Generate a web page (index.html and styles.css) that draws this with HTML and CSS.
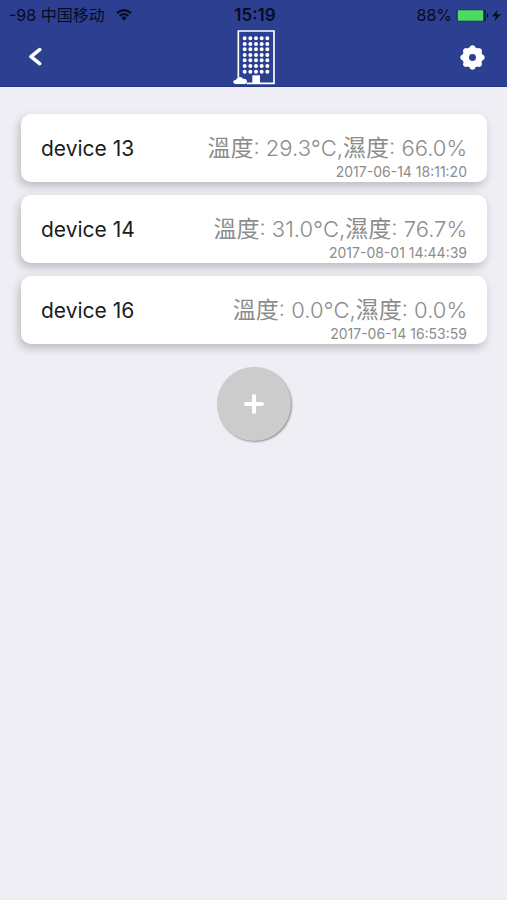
FILE: index.html
```html
<!DOCTYPE html>
<html lang="zh-Hant">
<head>
    <meta charset="UTF-8">
    <meta name="viewport" content="width=device-width, initial-scale=1">
    <title>Devices</title>
    <link rel="stylesheet" href="styles.css">
</head>
<body>
<header class="header">
    <div class="status">
        <div class="carrier">
            <span lang="zh-Hans">-98 中国移动</span>
            <svg class="wifi" viewBox="0 0 48 36">
                <path d="M3 13Q24 -6 45 13M11 21Q24 9 37 21" fill="none" stroke="currentColor" stroke-width="6"/>
                <path d="M16 26Q24 19 32 26L24 35Z" fill="currentColor"/>
            </svg>
        </div>
        <time class="clock">15:19</time>
        <div class="power">
            <span>88%</span>
            <svg class="battery" viewBox="0 0 135 39">
                <rect x="2" y="2" width="88" height="35" rx="5" fill="#17204d"/>
                <rect x="5" y="4" width="77" height="31" rx="2" fill="#4cdb60"/>
                <path d="M93 12Q101 19 93 27Z" fill="#070b20"/>
                <path d="M124 3L109 22H120L115 37L135 16H122Z" fill="#070b20"/>
            </svg>
        </div>
    </div>
    <nav class="nav">
        <button class="nav-button" aria-label="Back">
            <svg class="back" viewBox="0 0 42 60">
                <path d="M35 8L9 29L35 50" fill="none" stroke="#fff" stroke-width="11" stroke-linecap="round" stroke-linejoin="round"/>
            </svg>
        </button>
        <svg class="building" viewBox="36 87 132 168">
            <path d="M55 232V93H162V250H80" fill="none" stroke="#fff" stroke-width="5"/>
            <g stroke="#fff" stroke-width="12" stroke-linecap="round" stroke-dasharray="0 17">
                <path d="M74 115H143"/>
                <path d="M74 132H143"/>
                <path d="M74 148H143"/>
                <path d="M74 165H143"/>
                <path d="M74 181H143"/>
                <path d="M74 198H143"/>
                <path d="M74 215H143"/>
            </g>
            <path d="M97 226H120V252H97Z" fill="#fff"/>
            <path d="M47 252Q39 251 40 244Q42 239 48 239Q51 230 60 231Q67 232 69 236Q79 235 81 243Q82 251 74 252Z" fill="#fff"/>
        </svg>
        <button class="nav-button" aria-label="Settings">
            <svg class="gear" viewBox="0 0 72 72">
                <circle cx="36" cy="36" r="20" fill="none" stroke="#fff" stroke-width="20"/>
                <g stroke="#fff" stroke-width="16" stroke-linecap="round">
                    <path d="M36 9V10M36 62V63M9 36H10M62 36H63M17 17L18 18M54 54L55 55M17 55L18 54M54 18L55 17"/>
                </g>
            </svg>
        </button>
    </nav>
</header>
<main class="main">
    <ul class="devices">
        <li class="device">
            <span class="name">device 13</span>
            <div class="data">
                <span class="values"><span class="label">溫度</span>: 29.3°C,<span class="label">濕度</span>: 66.0%</span>
                <time class="date">2017-06-14 18:11:20</time>
            </div>
        </li>
        <li class="device">
            <span class="name">device 14</span>
            <div class="data">
                <span class="values"><span class="label">溫度</span>: 31.0°C,<span class="label">濕度</span>: 76.7%</span>
                <time class="date">2017-08-01 14:44:39</time>
            </div>
        </li>
        <li class="device">
            <span class="name">device 16</span>
            <div class="data">
                <span class="values"><span class="label">溫度</span>: 0.0°C,<span class="label">濕度</span>: 0.0%</span>
                <time class="date">2017-06-14 16:53:59</time>
            </div>
        </li>
    </ul>
    <button class="add" aria-label="Add device">
        <svg class="plus" viewBox="0 0 60 60">
            <path d="M30 6V54M6 30H54" stroke="#fff" stroke-width="12" stroke-linecap="round"/>
        </svg>
    </button>
</main>
</body>
</html>
```
FILE: styles.css
```css
* {
    box-sizing: border-box;
}

body {
    margin: 0;
    min-height: 100vh;
    background: #efeef4;
    color: #1c1c1c;
    font-family: Inter, "Noto Sans CJK TC", sans-serif;
}

button {
    padding: 0;
    border: none;
    background: none;
}

svg {
    display: block;
}

.header {
    background: #2c3f90;
    border-bottom: 1px solid #24357f;
}

.status {
    display: grid;
    grid-template-columns: 1fr auto 1fr;
    align-items: center;
    height: 29px;
    padding: 0 6px 0 9px;
    color: #070b20;
    font-size: 16px;
    line-height: 30px;
}

.carrier {
    display: flex;
    align-items: center;
    gap: 11px;
    font-family: Inter, "Noto Sans CJK SC", sans-serif;
}

.wifi {
    width: 16px;
    height: 12px;
}

.clock {
    font-size: 17px;
    font-weight: 600;
}

.power {
    display: flex;
    align-items: center;
    justify-content: flex-end;
    gap: 4px;
}

.battery {
    width: 45px;
    height: 13px;
}

.nav {
    display: grid;
    grid-template-columns: 1fr auto 1fr;
    align-items: center;
    padding: 0 22px 1px;
}

.nav-button {
    justify-self: start;
    padding-left: 6px;
}

.nav-button:last-child {
    justify-self: end;
}

.back {
    width: 14px;
    height: 20px;
}

.building {
    width: 44px;
    height: 56px;
}

.gear {
    width: 25px;
    height: 25px;
}

.main {
    padding: 27px 20px 27px 21px;
}

.devices {
    display: flex;
    flex-direction: column;
    gap: 13px;
    margin: 0;
    padding: 0;
    list-style: none;
}

.device {
    display: flex;
    align-items: center;
    justify-content: space-between;
    height: 68px;
    padding: 0 20px;
    border-radius: 10px;
    background: #fff;
    box-shadow: -2px 4px 10px rgba(0, 0, 0, 0.22);
}

.name {
    font-size: 21px;
}

.data {
    display: flex;
    flex-direction: column;
    align-items: flex-end;
    padding-top: 14px;
    color: #8c8c8c;
}

.values {
    font-size: 22px;
    line-height: 34px;
    font-weight: 300;
}

.label {
    font-size: 23px;
    line-height: 24px;
    font-weight: 400;
}

.date {
    font-size: 14px;
    line-height: 14px;
}

.add {
    display: block;
    width: 74px;
    height: 74px;
    margin: 23px auto 0;
    border-radius: 50%;
    background: #ccc;
    box-shadow: 1px 1px 2px rgba(0, 0, 0, 0.4);
}

.plus {
    width: 20px;
    height: 20px;
    margin: 0 auto;
}
```
